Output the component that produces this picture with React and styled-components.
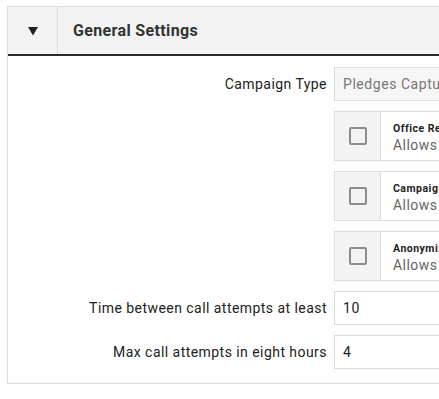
import React from "react";
import styled, { createGlobalStyle } from "styled-components";

const Global = createGlobalStyle`
  html, body { margin: 0; padding: 0; background: #fff; overflow: hidden; }
  body { font-family: Roboto, "Liberation Sans", sans-serif; color: #222; }
`;

const Panel = styled.section`
  margin: 6px 0 0 7px;
  width: 620px;
  border: 1px solid #dcdcdc;
  box-sizing: border-box;
`;

const Header = styled.header`
  display: flex;
  height: 47px;
  background: #f3f3f3;
  border-bottom: 2px solid #2b2b2d;
`;

const Toggle = styled.div`
  width: 49px;
  flex: none;
  display: flex;
  align-items: center;
  justify-content: center;
  padding-top: 2px;
  border-right: 1px solid #dcdcdc;
  color: #222;
`;

const Title = styled.h2`
  margin: 0;
  padding-left: 15px;
  display: flex;
  align-items: center;
  font-size: 16px;
  font-weight: 700;
  color: #333;
  letter-spacing: 0.35px;
`;

const Body = styled.div`
  display: grid;
  grid-template-columns: 319px 1fr;
  column-gap: 7px;
  row-gap: 10px;
  padding: 11px 0 14px;
  align-items: center;
`;

const Label = styled.label`
  text-align: right;
  font-size: 14px;
  color: #222;
  letter-spacing: 0.45px;
`;

const Input = styled.div`
  height: 34px;
  box-sizing: border-box;
  border: 1px solid #dcdcdc;
  background: ${(p) => (p.$disabled ? "#f6f6f6" : "#fff")};
  color: ${(p) => (p.$disabled ? "#777" : "#222")};
  display: flex;
  align-items: center;
  padding-left: 8px;
  font-size: 14px;
  letter-spacing: 0.55px;
  white-space: nowrap;
`;

const CheckRow = styled.div`
  grid-column: 2;
  display: flex;
  height: 50px;
  box-sizing: border-box;
  border: 1px solid #dcdcdc;
`;

const BoxCell = styled.div`
  width: 45px;
  flex: none;
  background: #f3f3f3;
  border-right: 1px solid #dcdcdc;
  display: flex;
  align-items: center;
  justify-content: center;
`;

const Box = styled.span`
  width: 14px;
  height: 14px;
  border: 2px solid #8c8c8c;
  border-radius: 2px;
  background: #f3f3f3;
  margin-left: 1px;
`;

const CheckText = styled.div`
  padding: 3px 12px 0;
  display: flex;
  flex-direction: column;
  justify-content: center;
  white-space: nowrap;
`;

const CheckTitle = styled.div`
  font-size: 10.5px;
  font-weight: 700;
  color: #222;
  letter-spacing: 0.5px;
  line-height: 14px;
`;

const CheckDesc = styled.div`
  font-size: 14px;
  color: #666;
  letter-spacing: 0.45px;
  line-height: 18px;
`;

const checks = [
  ["Office Restricted", "Allows only office users to make calls"],
  ["Campaign Closed", "Allows the campaign to be closed to new calls"],
  ["Anonymize Callers", "Allows callers to remain anonymous"],
];

export default function App() {
  return (
    <>
      <Global />
      <Panel>
        <Header>
          <Toggle>
            <svg width="10" height="9" viewBox="0 0 10 9">
              <path d="M0 0 L10 0 L5 8.5 Z" fill="#222" />
            </svg>
          </Toggle>
          <Title>General Settings</Title>
        </Header>
        <Body>
          <Label>Campaign Type</Label>
          <Input $disabled>Pledges Captured</Input>
          {checks.map(([t, d]) => (
            <CheckRow key={t}>
              <BoxCell>
                <Box />
              </BoxCell>
              <CheckText>
                <CheckTitle>{t}</CheckTitle>
                <CheckDesc>{d}</CheckDesc>
              </CheckText>
            </CheckRow>
          ))}
          <Label>Time between call attempts at least</Label>
          <Input>10</Input>
          <Label>Max call attempts in eight hours</Label>
          <Input>4</Input>
        </Body>
      </Panel>
    </>
  );
}
